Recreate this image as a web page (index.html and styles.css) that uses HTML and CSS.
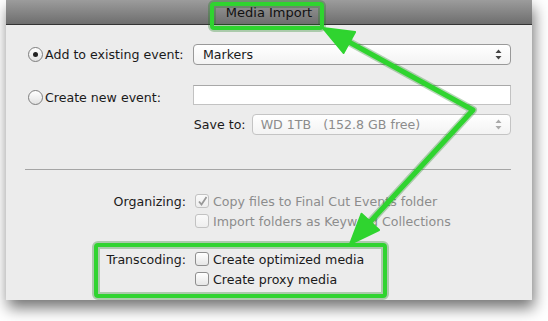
FILE: index.html
```html
<!DOCTYPE html>
<html>
<head>
  <title>Media Import</title>
  <link rel="stylesheet" href="styles.css">
</head>
<body>

  <div class="window">
    <div class="titlebar">Media Import</div>

    <div class="content">
      <div class="row row-event">
        <label class="radio-label"><span class="radio checked"></span>Add to existing event:</label>
        <div class="popup">
          <span>Markers</span>
          <svg class="arrows" width="7" height="11" viewBox="0 0 7 11"><path d="M3.5 0.5 L6.5 4 L0.5 4 Z M0.5 7 L6.5 7 L3.5 10.5 Z" fill="#444"/></svg>
        </div>
      </div>

      <div class="row row-new">
        <label class="radio-label"><span class="radio"></span>Create new event:</label>
        <div class="textfield"></div>
      </div>

      <div class="row row-save">
        <span class="save-label">Save to:</span>
        <div class="popup disabled">
          <span>WD 1TB &nbsp; (152.8 GB free)</span>
          <svg class="arrows" width="7" height="11" viewBox="0 0 7 11"><path d="M3.5 0.5 L6.5 4 L0.5 4 Z M0.5 7 L6.5 7 L3.5 10.5 Z" fill="#aaa"/></svg>
        </div>
      </div>

      <div class="separator"></div>

      <div class="options">
        <div class="opt">
          <span class="opt-label">Organizing:</span>
          <span class="check disabled">
            <svg width="11" height="11" viewBox="0 0 11 11"><path d="M2 5.5 L4.5 8.5 L9.5 1" fill="none" stroke="#999" stroke-width="1.8"/></svg>
          </span>
          <span class="opt-text muted">Copy files to Final Cut Events folder</span>
        </div>
        <div class="opt">
          <span class="opt-label"></span>
          <span class="check disabled"></span>
          <span class="opt-text muted">Import folders as Keyword Collections</span>
        </div>
        <div class="opt opt-gap">
          <span class="opt-label">Transcoding:</span>
          <span class="check"></span>
          <span class="opt-text">Create optimized media</span>
        </div>
        <div class="opt">
          <span class="opt-label"></span>
          <span class="check"></span>
          <span class="opt-text">Create proxy media</span>
        </div>
      </div>
    </div>
  </div>

  <!-- green annotation on top of the screenshot -->
  <svg class="annotation" width="548" height="321" viewBox="0 0 548 321">
    <g fill="none" stroke="#137a13" stroke-width="8" stroke-opacity="0.3" stroke-linejoin="round">
      <rect x="212" y="4" width="110" height="24" rx="2"/>
      <rect x="96" y="245" width="289" height="51" rx="2"/>
      <polyline points="349,42 473,110 370,222"/>
    </g>
    <g fill="none" stroke="#2fd42f" stroke-width="4" stroke-linejoin="round">
      <rect x="212" y="4" width="110" height="24" rx="2"/>
      <rect x="96" y="245" width="289" height="51" rx="2"/>
    </g>
    <polyline points="349,42 473,110 370,222" fill="none" stroke="#2fd42f" stroke-width="5" stroke-linejoin="round"/>
    <path d="M323 28 L355.1 31.9 L343.5 52.9 Z" fill="#2fd42f" stroke="#2fd42f" stroke-width="2" stroke-linejoin="round"/>
    <path d="M350 244 L379.1 230 L361.5 213.8 Z" fill="#2fd42f" stroke="#2fd42f" stroke-width="2" stroke-linejoin="round"/>
  </svg>

</body>
</html>
```

FILE: styles.css
```css
body {
  margin: 0;
  background-color: #fff;
  font-family: "DejaVu Sans", sans-serif;
  font-size: 12.6px;
  color: #1a1a1a;
  width: 548px;
  height: 321px;
  overflow: hidden;
}

.window {
  margin-left: 6px;
  width: 526px;
  height: 300px;
  background-color: #ececec;
  box-shadow: 2px 8px 14px rgba(0, 0, 0, 0.55);
  display: flex;
  flex-direction: column;
}

.titlebar {
  height: 24px;
  line-height: 25px;
  text-align: center;
  font-size: 13px;
  color: #111;
  background: linear-gradient(#9c9c9c, #6e6e6e);
  border-bottom: 1px solid #333;
}

.content {
  padding: 0 21px 0 22px;
}

.row {
  display: flex;
  align-items: center;
}

.row-event {
  margin-top: 19px;
  height: 21px;
}

.row-new {
  margin-top: 20px;
  height: 20px;
}

.row-save {
  margin-top: 9px;
  height: 21px;
}

.radio-label {
  width: 165px;
  display: flex;
  align-items: center;
  gap: 2px;
}

.row-new .radio-label {
  position: relative;
  top: 2px;
}

.radio {
  width: 13px;
  height: 13px;
  border-radius: 50%;
  border: 1px solid #7e7e7e;
  background: linear-gradient(#fff, #e2e2e2);
  display: flex;
  align-items: center;
  justify-content: center;
}

.radio.checked::after {
  content: "";
  width: 5px;
  height: 5px;
  border-radius: 50%;
  background-color: #222;
}

.popup {
  height: 19px;
  border: 1px solid #999;
  border-radius: 4px;
  background: linear-gradient(#fff, #f3f3f3);
  display: flex;
  align-items: center;
  justify-content: space-between;
  padding: 0 8px 0 9px;
  width: 299px;
}

.popup.disabled {
  width: 244px;
  margin-left: 6px;
  border-color: #c4c4c4;
  color: #8c8c8c;
  padding-left: 8px;
}

.textfield {
  width: 316px;
  height: 18px;
  background-color: #fff;
  border: 1px solid #c2c2c2;
  border-top-color: #a8a8a8;
}

.save-label {
  width: 220px;
  text-align: right;
}

.separator {
  margin: 34px 0 0 -3px;
  border-top: 1px solid #a5a5a5;
  width: 486px;
}

.options {
  margin-top: 21px;
}

.opt {
  display: flex;
  align-items: center;
  height: 20px;
}

.opt-gap {
  margin-top: 18px;
}

.opt-label {
  width: 158px;
  text-align: right;
  margin-right: 9px;
}

.check {
  width: 12px;
  height: 12px;
  border: 1px solid #8e8e8e;
  border-radius: 3px;
  background: linear-gradient(#fff, #e6e6e6);
  display: flex;
  align-items: center;
  justify-content: center;
  margin-right: 4px;
}

.check.disabled {
  border-color: #c2c2c2;
  background: linear-gradient(#fafafa, #eee);
}

.muted {
  color: #8c8c8c;
}

.annotation {
  position: absolute;
  left: 0;
  top: 0;
}
```
